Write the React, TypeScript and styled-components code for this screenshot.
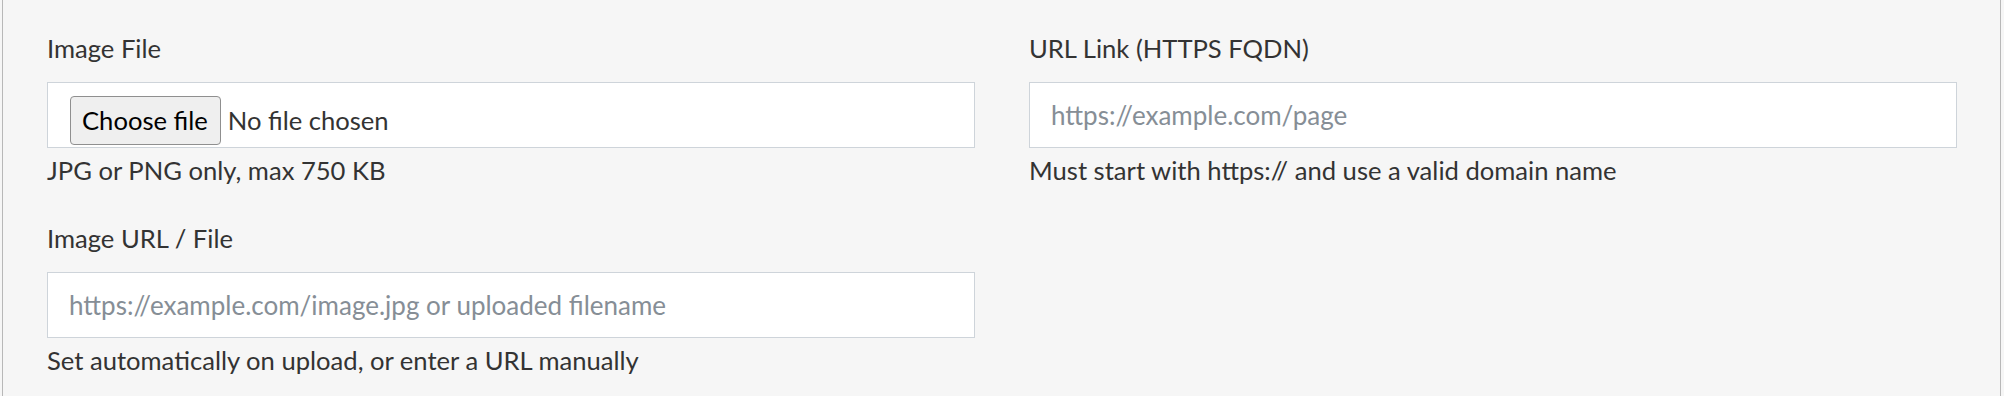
import styled, { createGlobalStyle } from "styled-components";

const GlobalStyle = createGlobalStyle`
	html, body {
		margin: 0;
		background: #f6f6f6;
	}
	* {
		box-sizing: border-box;
	}
`

const fontStack = `Lato, "Noto Sans", sans-serif`
const textColor = "#333333"

const Panel = styled.div`
	margin: 0 3px 0 2px;
	min-height: 396px;
	border-left: 1px solid #b8b8b8;
	border-right: 1px solid #b8b8b8;
	padding: 29px 43px 0 44px;
	font-family: ${fontStack};
	color: ${textColor};
`

const FormGrid = styled.div`
	display: grid;
	grid-template-columns: 1fr 1fr;
	column-gap: 54px;
	row-gap: 29px;
`

const Field = styled.div`
	display: flex;
	flex-direction: column;
`

const Label = styled.label`
	font-size: 25.6px;
	line-height: 1.5;
	margin-bottom: 15px;
`

const TextInput = styled.input`
	height: 66px;
	width: 100%;
	padding: 0 21px;
	border: 1.6px solid #ced4da;
	background: #ffffff;
	font-family: ${fontStack};
	font-size: 26px;
	color: ${textColor};
	outline: none;

	&::placeholder {
		color: #868e96;
	}
`

// styled like the native control, but with the reference's wording
const FileBox = styled.label`
	display: flex;
	align-items: flex-start;
	gap: 7px;
	height: 66px;
	width: 100%;
	padding: 12.5px 22px 0;
	border: 1.6px solid #ced4da;
	background: #ffffff;
	cursor: pointer;

	& > input {
		position: absolute;
		width: 1px;
		height: 1px;
		opacity: 0;
		pointer-events: none;
	}
`

const FileButton = styled.span`
	display: inline-flex;
	align-items: center;
	height: 49px;
	padding: 0 12px 0 11px;
	font-size: 25.6px;
	color: #000000;
	background: #efefef;
	border: 1px solid #8f8f8f;
	border-radius: 4px;
`

const FileName = styled.span`
	height: 49px;
	line-height: 49px;
	font-size: 25.6px;
	color: ${textColor};
`

const HelpText = styled.small`
	font-size: 25.6px;
	line-height: 1.5;
	margin-top: 3px;
`

type FieldProps = {
	label: string
	help: string
	id: string
	placeholder?: string
	file?: boolean
}

const FormField = ({ label, help, id, placeholder, file }: FieldProps) => (
	<Field>
		<Label htmlFor={file ? undefined : id}>{label}</Label>
		{file
			? (
				<FileBox>
					<input id={id} type="file" accept=".jpg,.jpeg,.png" />
					<FileButton>Choose file</FileButton>
					<FileName>No file chosen</FileName>
				</FileBox>
			)
			: <TextInput id={id} type="text" placeholder={placeholder} />}
		<HelpText>{help}</HelpText>
	</Field>
)

const App = () => {
	return (
		<>
			<GlobalStyle />
			<Panel>
				<FormGrid>
					<FormField id="imageFile" label="Image File" help="JPG or PNG only, max 750 KB" file />
					<FormField id="urlLink" label="URL Link (HTTPS FQDN)" placeholder="https://example.com/page" help="Must start with https:// and use a valid domain name" />
					<FormField id="imageUrl" label="Image URL / File" placeholder="https://example.com/image.jpg or uploaded filename" help="Set automatically on upload, or enter a URL manually" />
				</FormGrid>
			</Panel>
		</>
	)
}

export default App
